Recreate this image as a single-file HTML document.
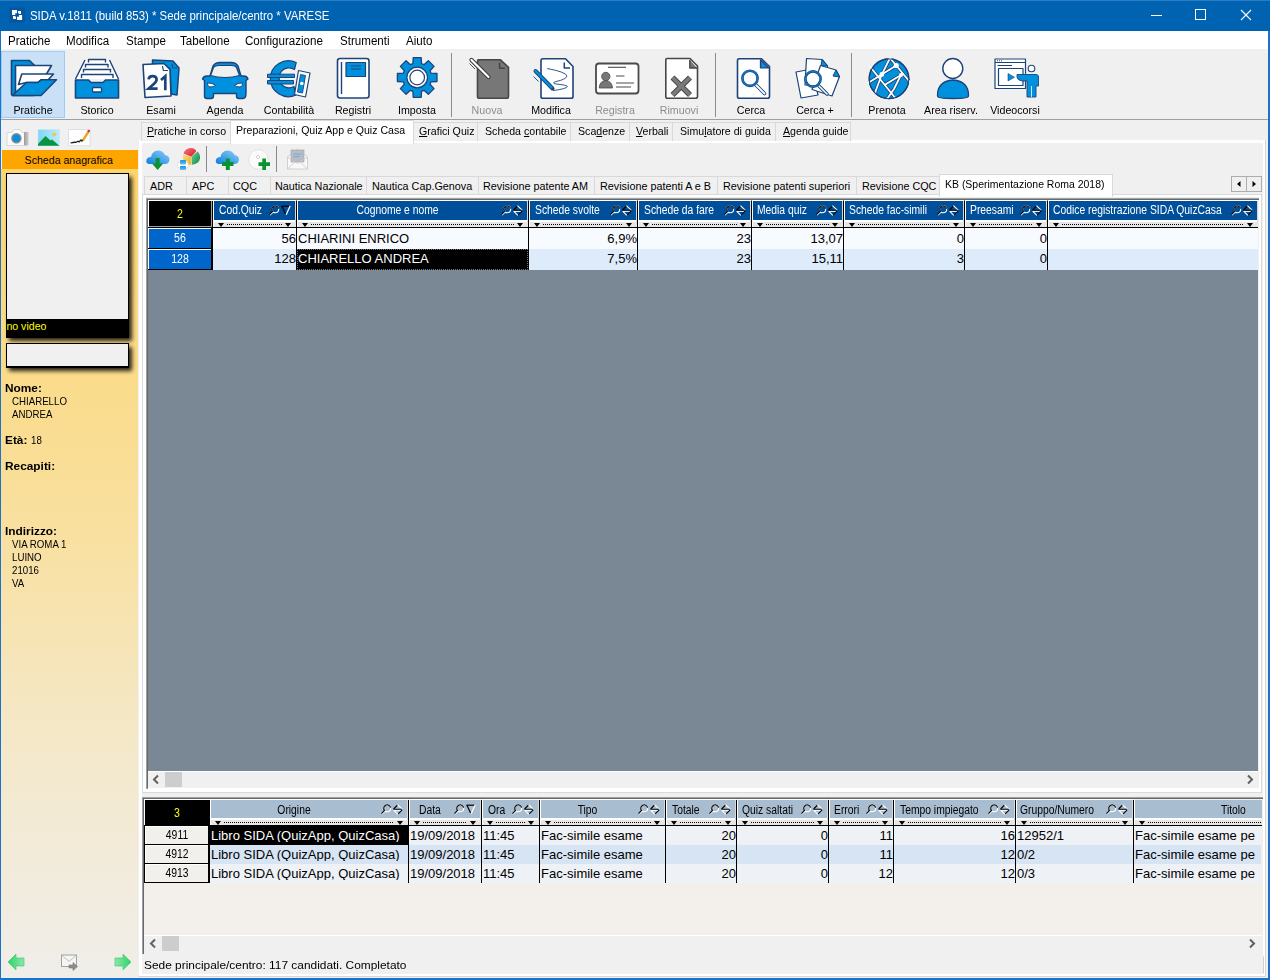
<!DOCTYPE html>
<html><head><meta charset="utf-8">
<style>
*{margin:0;padding:0;box-sizing:border-box}
html,body{width:1270px;height:980px;overflow:hidden;background:#f0f0f0;font-family:"Liberation Sans",sans-serif;}
.a{position:absolute}
.t{position:absolute;white-space:nowrap;line-height:1}
svg{position:absolute;overflow:visible}
.lbl{position:absolute;top:104px;width:64px;text-align:center;font-size:10.6px;color:#000;white-space:nowrap;line-height:1}
.mi{top:35px;font-size:12px;color:#000}
.tab{position:absolute;top:122px;height:19px;background:#f0f0f0;border:1px solid #d9d9d9;border-bottom:none}
.tabt{position:absolute;font-size:10.6px;white-space:nowrap;line-height:1;color:#000}
.stab{position:absolute;top:176px;height:19px;background:#f0f0f0;border:1px solid #d9d9d9;border-bottom:none}
.u{text-decoration:underline}
.ht{position:absolute;font-size:10.5px;white-space:nowrap;line-height:1}
.dt{position:absolute;font-size:13px;white-space:nowrap;line-height:1;color:#000}
.dots{position:absolute;height:1px;background-image:linear-gradient(90deg,#000 50%,transparent 50%);background-size:2px 1px}
</style></head><body>
<div class="a" style="left:0px;top:0px;width:1270px;height:980px;background:#1a73c8"></div>
<div class="a" style="left:1px;top:0px;width:1267px;height:978px;background:#f0f0f0"></div>
<div class="a" style="left:0px;top:0px;width:1270px;height:31px;background:#0063b1"></div>
<div class="a" style="left:0px;top:0px;width:1270px;height:1px;background:#2a7cc4"></div>
<svg style="left:0;top:0" width="40" height="31" viewBox="0 0 40 31">
<rect x="9.4" y="7.4" width="15.5" height="15.3" fill="#0656a2"/>
<path d="M12 10 H17 V13.3 H15.2 V15 H12 Z" fill="#fff"/>
<path d="M18 11 H21 V13.9 H19 L18 12.8 Z" fill="#fff"/>
<path d="M13 16 H15 L16 17 V18.9 H13 Z" fill="#fff"/>
<path d="M19 15 H22.1 V20.1 H17 V16.8 H19 Z" fill="#fff"/>
</svg>
<div class="t" style="top:10.04px;font-size:12px;color:#fff;left:30px;transform:scaleX(0.951);transform-origin:0 0;">SIDA v.1811 (build 853) * Sede principale/centro * VARESE</div>
<svg style="left:1130px;top:0" width="140" height="31" viewBox="1130 0 140 31">
<path d="M1151 15.5 h11" stroke="#fff" stroke-width="1"/>
<rect x="1195.5" y="9.5" width="10" height="10" fill="none" stroke="#fff" stroke-width="1"/>
<path d="M1241 10 l10 10 M1251 10 l-10 10" stroke="#fff" stroke-width="1.1"/>
</svg>
<div class="a" style="left:1px;top:31px;width:1267px;height:18px;background:#fff"></div>
<div class="t" style="top:34.52px;font-size:12.5px;color:#000;left:8px;transform:scaleX(0.927);transform-origin:0 0;">Pratiche</div>
<div class="t" style="top:34.52px;font-size:12.5px;color:#000;left:66px;transform:scaleX(0.927);transform-origin:0 0;">Modifica</div>
<div class="t" style="top:34.52px;font-size:12.5px;color:#000;left:126px;transform:scaleX(0.927);transform-origin:0 0;">Stampe</div>
<div class="t" style="top:34.52px;font-size:12.5px;color:#000;left:180px;transform:scaleX(0.927);transform-origin:0 0;">Tabellone</div>
<div class="t" style="top:34.52px;font-size:12.5px;color:#000;left:245px;transform:scaleX(0.927);transform-origin:0 0;">Configurazione</div>
<div class="t" style="top:34.52px;font-size:12.5px;color:#000;left:340px;transform:scaleX(0.927);transform-origin:0 0;">Strumenti</div>
<div class="t" style="top:34.52px;font-size:12.5px;color:#000;left:406px;transform:scaleX(0.927);transform-origin:0 0;">Aiuto</div>
<div class="a" style="left:1px;top:51px;width:64px;height:67px;background:#c9e0f7;border:1px solid #9ccdf5"></div>
<div class="a" style="left:1px;top:119px;width:1267px;height:1px;background:#a0a0a0"></div>
<div class="a" style="left:451px;top:53px;width:1px;height:64px;background:#8c8c8c"></div>
<div class="a" style="left:715px;top:53px;width:1px;height:64px;background:#8c8c8c"></div>
<div class="a" style="left:851px;top:53px;width:1px;height:64px;background:#8c8c8c"></div>
<div class="t" style="top:104.28px;font-size:11.6px;color:#000;left:-7.0px;width:80px;text-align:center;transform:scaleX(0.92);transform-origin:50% 0;">Pratiche</div>
<div class="t" style="top:104.28px;font-size:11.6px;color:#000;left:57.0px;width:80px;text-align:center;transform:scaleX(0.92);transform-origin:50% 0;">Storico</div>
<div class="t" style="top:104.28px;font-size:11.6px;color:#000;left:121.0px;width:80px;text-align:center;transform:scaleX(0.92);transform-origin:50% 0;">Esami</div>
<div class="t" style="top:104.28px;font-size:11.6px;color:#000;left:185.0px;width:80px;text-align:center;transform:scaleX(0.92);transform-origin:50% 0;">Agenda</div>
<div class="t" style="top:104.28px;font-size:11.6px;color:#000;left:249.0px;width:80px;text-align:center;transform:scaleX(0.92);transform-origin:50% 0;">Contabilità</div>
<div class="t" style="top:104.28px;font-size:11.6px;color:#000;left:313.0px;width:80px;text-align:center;transform:scaleX(0.92);transform-origin:50% 0;">Registri</div>
<div class="t" style="top:104.28px;font-size:11.6px;color:#000;left:377.0px;width:80px;text-align:center;transform:scaleX(0.92);transform-origin:50% 0;">Imposta</div>
<div class="t" style="top:104.28px;font-size:11.6px;color:#8d8d8d;left:447.0px;width:80px;text-align:center;transform:scaleX(0.92);transform-origin:50% 0;">Nuova</div>
<div class="t" style="top:104.28px;font-size:11.6px;color:#000;left:511.0px;width:80px;text-align:center;transform:scaleX(0.92);transform-origin:50% 0;">Modifica</div>
<div class="t" style="top:104.28px;font-size:11.6px;color:#8d8d8d;left:575.0px;width:80px;text-align:center;transform:scaleX(0.92);transform-origin:50% 0;">Registra</div>
<div class="t" style="top:104.28px;font-size:11.6px;color:#8d8d8d;left:639.0px;width:80px;text-align:center;transform:scaleX(0.92);transform-origin:50% 0;">Rimuovi</div>
<div class="t" style="top:104.28px;font-size:11.6px;color:#000;left:711.0px;width:80px;text-align:center;transform:scaleX(0.92);transform-origin:50% 0;">Cerca</div>
<div class="t" style="top:104.28px;font-size:11.6px;color:#000;left:775.0px;width:80px;text-align:center;transform:scaleX(0.92);transform-origin:50% 0;">Cerca +</div>
<div class="t" style="top:104.28px;font-size:11.6px;color:#000;left:847.0px;width:80px;text-align:center;transform:scaleX(0.92);transform-origin:50% 0;">Prenota</div>
<div class="t" style="top:104.28px;font-size:11.6px;color:#000;left:911.0px;width:80px;text-align:center;transform:scaleX(0.92);transform-origin:50% 0;">Area riserv.</div>
<div class="t" style="top:104.28px;font-size:11.6px;color:#000;left:975.0px;width:80px;text-align:center;transform:scaleX(0.92);transform-origin:50% 0;">Videocorsi</div>
<svg style="left:0;top:0" width="1270" height="120" viewBox="0 0 1270 120" stroke-linejoin="round">
<!-- Pratiche folder -->
<path d="M11.5 60.5 H29.5 L33.5 64.5 H34 V95.5 H12.5 L11.5 94.5 Z" fill="#0091de" stroke="#1c4479" stroke-width="1.6"/>
<path d="M15.5 65.5 H51.5 L46.5 74 L30 84 L15.5 92.5 Z" fill="#fff" stroke="#1c4479" stroke-width="1.6"/>
<path d="M18.5 84.5 L21.8 74 H53.5 L48 80 H41 L38 82.5 H26.5 Z" fill="#fff" stroke="#1c4479" stroke-width="1.6"/>
<path d="M15.5 92.5 L26.5 82.5 H38 L41 79.8 H56.5 L41 95.5 H12.5 Z" fill="#0091de" stroke="#1c4479" stroke-width="1.6"/>
<!-- Storico drawer -->
<path d="M85 60 L75.5 79 H118.5 L109.5 60 Z" fill="#fff"/>
<path d="M85 60 L75.5 79 M109.5 60 L118.5 79" stroke="#1c4479" stroke-width="1.4" fill="none"/>
<path d="M88.5 62.5 V59.5 H105.5 V62.5 M85.5 67.5 V64.5 H108 V67.5 M83.5 72.5 V69.5 H110.5 V72.5 M81.5 78 V74.5 H113 V78" fill="none" stroke="#1c4479" stroke-width="1.4"/>
<path d="M75.5 80 H88.5 L91 82.5 H103 L105.5 80 H118.5 V98 H75.5 Z" fill="#0091de" stroke="#1c4479" stroke-width="1.6"/>
<rect x="92.5" y="87.5" width="9" height="4.5" rx="1" fill="#fff" stroke="#1c4479" stroke-width="1.3"/>
<!-- Esami calendar -->
<path d="M152.5 60 L173 61 L179 68 L177 95 L171 94 L170 69 L164 64 L152.5 64 Z" fill="#0091de" stroke="#1c4479" stroke-width="1.5"/>
<path d="M143 64.5 L164 63.5 L170 69.5 L171 96 L145 97.5 Z" fill="#fff" stroke="#1c4479" stroke-width="1.6"/>
<path d="M162.5 66 L163.3 70.5 L168 70.5" fill="none" stroke="#1c4479" stroke-width="1.2"/>
<path d="M148.6 79.3 Q149 76.2 152.6 76.2 Q156.6 76.2 156.6 79.6 Q156.6 82 153.2 84.6 L148.6 88.6 H157.6" fill="none" stroke="#1c4479" stroke-width="2.7" stroke-linejoin="miter"/>
<path d="M161 80 L165.3 76.3 V90.3" fill="none" stroke="#1c4479" stroke-width="2.7" stroke-linejoin="miter"/>
<path d="M172 63.5 L172.5 67.8 L177 68.2" fill="none" stroke="#1c4479" stroke-width="1.1"/>
<!-- Agenda car -->
<path d="M210 76 L213 66 Q215 62.5 220 62.5 H231 Q236 62.5 238 66 L241 76 H243.5 Q247 76 248 79 L246 80.5 V93 Q246 98.5 243 98.5 H239 Q236.5 98.5 236.5 96 V93.5 H213.5 V96 Q213.5 98.5 211 98.5 H207 Q204.5 98.5 204.5 96 V80.5 L202.5 79 Q203.5 76 207 76 Z" fill="#0091de" stroke="#1c4479" stroke-width="1.4"/>
<path d="M210.5 75.5 L213.5 67.5 Q215 65.5 219 65.5 H231.5 Q235.5 65.5 236.5 67.5 L239.5 75.5 Q233 77.5 225 77.5 Q217 77.5 210.5 75.5 Z" fill="#f0f0f0" stroke="#1c4479" stroke-width="1.2"/>
<path d="M207.5 83 Q212 82.5 215.5 85.5 Q214 87 210 87 Q207 86.5 207.5 83 Z" fill="#fff" stroke="#1c4479" stroke-width="1"/>
<path d="M242.5 83 Q238 82.5 234.5 85.5 Q236 87 240 87 Q243 86.5 242.5 83 Z" fill="#fff" stroke="#1c4479" stroke-width="1"/>
<!-- Contabilita euro -->
<path d="M296.2 62.5 A18 18 0 1 0 296 95 L294 86.5 A10 10 0 1 1 294.5 69.5 Z" fill="#0091de" stroke="#1c4479" stroke-width="1.2"/>
<path d="M267.5 74.2 H294.5 V77.5 H267.5 Z M267.5 80.5 H293.5 V84 H267.5 Z" fill="#0091de" stroke="#1c4479" stroke-width="1"/>
<path d="M298.5 70.5 L310 73 L305.5 97 L294.5 94.5 Z" fill="#fff" stroke="#1c4479" stroke-width="1.2"/>
<path d="M300.5 74.5 L305.5 75.5 L302.5 93 L297.5 92 Z" fill="#0091de" stroke="#1c4479" stroke-width="0.9"/>
<circle cx="301.8" cy="83.5" r="1.8" fill="#fff"/>
<!-- Registri book -->
<rect x="337.5" y="58.5" width="31.5" height="39.5" rx="2.5" fill="#fff" stroke="#1c4479" stroke-width="1.6"/>
<path d="M341.5 62 V94" stroke="#1c4479" stroke-width="1.4"/>
<rect x="346" y="62.5" width="19.5" height="14" fill="#0091de" stroke="#1c4479" stroke-width="1.2"/>
<path d="M351 66 H361 M351 69 H361" stroke="#1c4479" stroke-width="1.2"/>
<!-- Imposta gear -->
<path d="M412.91 63.65 L413.19 57.70 L421.21 57.70 L421.49 63.65 L423.97 64.67 L428.36 60.66 L434.04 66.34 L430.03 70.73 L431.05 73.21 L437.00 73.49 L437.00 81.51 L431.05 81.79 L430.03 84.27 L434.04 88.66 L428.36 94.34 L423.97 90.33 L421.49 91.35 L421.21 97.30 L413.19 97.30 L412.91 91.35 L410.43 90.33 L406.04 94.34 L400.36 88.66 L404.37 84.27 L403.35 81.79 L397.40 81.51 L397.40 73.49 L403.35 73.21 L404.37 70.73 L400.36 66.34 L406.04 60.66 L410.43 64.67 Z" fill="#0091de" stroke="#1c4479" stroke-width="1.3"/><circle cx="417.2" cy="77.5" r="10.3" fill="#fff" stroke="#1c4479" stroke-width="1.2"/><circle cx="417.2" cy="77.5" r="7.3" fill="#fff" stroke="#1c4479" stroke-width="1.2"/>
<!-- Nuova -->
<path d="M478 59.8 H500.5 L508.5 67.3 V96.5 Q508.5 98.3 506.5 98.3 H479.5 Q477.5 98.3 477.5 96.5 V61.5 Q477.5 59.8 479.5 59.8 Z" fill="#777" stroke="#474747" stroke-width="1.6"/>
<path d="M499.6 62.5 V68.2 H505" fill="none" stroke="#474747" stroke-width="1.6"/>
<path d="M471.5 60 L488.5 77" stroke="#3a3a3a" stroke-width="4.2" stroke-linecap="round"/>
<path d="M471.5 60 L488.5 77" stroke="#fff" stroke-width="2.2" stroke-linecap="round"/>
<path d="M469.5 63.5 L475 69" stroke="#555" stroke-width="1"/>
<!-- Modifica -->
<path d="M543 58.8 H565.5 L573 66.5 V96.5 Q573 98.3 571 98.3 H543 Q541 98.3 541 96.5 V60.8 Q541 58.8 543 58.8 Z" fill="#fff" stroke="#1c4479" stroke-width="1.6"/>
<path d="M564.3 62.5 V68 H570" fill="none" stroke="#1c4479" stroke-width="1.5"/>
<path d="M547.2 68.5 Q566 72 567 76 Q566 79.5 556 81.5 Q551 83 556 84 Q567 85 567.5 86.5 Q566 89 553 90.5" fill="none" stroke="#1c4479" stroke-width="0.9"/>
<path d="M535.5 71 L552.5 88.5" stroke="#1c4479" stroke-width="4" stroke-linecap="round"/>
<path d="M535.5 71 L551.5 87.5" stroke="#0091de" stroke-width="2.2" stroke-linecap="round"/>
<path d="M533.5 76.5 L538.5 81.5" stroke="#1c4479" stroke-width="0.9"/>
<!-- Registra card -->
<rect x="596" y="63.5" width="42.5" height="30" rx="3" fill="#fff" stroke="#4a4a4a" stroke-width="1.8"/>
<path d="M608 67.3 H626" stroke="#4a4a4a" stroke-width="1.1"/>
<circle cx="605.8" cy="76.5" r="4.2" fill="#777" stroke="#4a4a4a" stroke-width="0.8"/>
<path d="M599.2 88 Q599.5 81 605.8 80.5 Q612 81 612.5 88 Z" fill="#777" stroke="#4a4a4a" stroke-width="0.8"/>
<path d="M616 76 H624.5 M616 83 H634 M616 87 H631" stroke="#888" stroke-width="1.5"/>
<!-- Rimuovi -->
<path d="M667 58.5 H690 L697.5 66 V96.5 Q697.5 98.3 695.5 98.3 H667.5 Q665.8 98.3 665.8 96.5 V60.5 Q665.8 58.5 667 58.5 Z" fill="#fff" stroke="#474747" stroke-width="1.6"/>
<path d="M689.8 60 V68 H697" fill="#777" stroke="#474747" stroke-width="1.4"/>
<path d="M672.5 77.5 L690 95 M690 77.5 L672.5 95" stroke="#474747" stroke-width="5.6"/>
<path d="M672.5 77.5 L690 95 M690 77.5 L672.5 95" stroke="#7a7a7a" stroke-width="3.8"/>
<!-- Cerca -->
<path d="M739 58.8 H761.5 L769.5 66.5 V96.5 Q769.5 98.3 767.5 98.3 H739.3 Q737.5 98.3 737.5 96.5 V60.8 Q737.5 58.8 739 58.8 Z" fill="#fff" stroke="#1c4479" stroke-width="1.6"/>
<path d="M760.5 60 V67.8 H768.5 Z" fill="#0091de" stroke="#1c4479" stroke-width="1.3"/>
<path d="M756 85 L764.5 93.5" stroke="#1c4479" stroke-width="3.6" stroke-linecap="round"/>
<path d="M756 85 L764.5 93.5" stroke="#fff" stroke-width="1.8" stroke-linecap="round"/>
<circle cx="750" cy="78.3" r="7.6" fill="#fff" stroke="#1c4479" stroke-width="2.6"/>
<circle cx="750" cy="78.3" r="7.6" fill="none" stroke="#0a78c8" stroke-width="1.4"/>
<!-- Cerca + -->
<path d="M796 72 L812 69 L818 95 L801 98 Z" fill="#fff" stroke="#1c4479" stroke-width="1.2"/>
<path d="M806.5 58.5 L822 59.5 L827.5 66 L826 86 L805 85 Z" fill="#fff" stroke="#1c4479" stroke-width="1.2"/>
<path d="M822 59.5 L821 66 L827.5 66 Z" fill="#0091de" stroke="#1c4479" stroke-width="1"/>
<path d="M820.5 65.5 L836 70 L839.5 76.5 L832 96 L812 89.5 Z" fill="#fff" stroke="#1c4479" stroke-width="1.2"/>
<path d="M836 70 L833 76 L839.5 77 Z" fill="#0091de" stroke="#1c4479" stroke-width="1"/>
<path d="M819 86 L827 94" stroke="#1c4479" stroke-width="3.4" stroke-linecap="round"/>
<path d="M819 86 L827 94" stroke="#fff" stroke-width="1.6" stroke-linecap="round"/>
<circle cx="813" cy="79" r="7.6" fill="#fff" stroke="#1c4479" stroke-width="2.6"/>
<circle cx="813" cy="79" r="7.6" fill="none" stroke="#0a78c8" stroke-width="1.4"/>
<!-- Prenota globe -->
<circle cx="889" cy="78.8" r="19.8" fill="#0091de" stroke="#1c4479" stroke-width="1.3"/>
<g fill="none" stroke-linecap="butt">
<g stroke="#1c4479" stroke-width="3.4">
<path d="M871.5 68.5 L894 96.5"/><path d="M889.5 59.5 L881.8 74.5 L875.5 91.5"/><path d="M891 59.5 L896.2 65.5 L909 81"/>
<path d="M869.5 82 L881.8 74.5 L896.2 65.5"/><path d="M884.5 85 L901 75"/><path d="M888 97.5 L894 89 L902 73"/>
</g>
<g stroke="#fff" stroke-width="1.7">
<path d="M870 66.6 L895.5 98.3"/><path d="M890 58 L881.8 74.5 L874.8 93.4"/><path d="M890 58 L896.2 65.5 L910.2 82.4"/>
<path d="M868 83 L881.8 74.5 L896.2 65.5"/><path d="M884.5 85 L901 75"/><path d="M887 99 L894 89 L902 73"/>
</g></g>
<circle cx="881.8" cy="74.5" r="2.4" fill="#fff"/>
<circle cx="896.2" cy="65.5" r="2.6" fill="#fff"/>
<circle cx="901" cy="75" r="2.1" fill="#fff"/>
<circle cx="889" cy="78.8" r="19.8" fill="none" stroke="#1c4479" stroke-width="1.1"/>
<!-- Area riserv person -->
<path d="M937.5 96 Q937 81.5 953 80 Q969 81.5 968.5 96 Q968.5 98.5 953 98.5 Q937.5 98.5 937.5 96 Z" fill="#0091de" stroke="#1c4479" stroke-width="1.3"/>
<circle cx="952.8" cy="68.5" r="10" fill="#fff" stroke="#1c4479" stroke-width="1.4"/>
<!-- Videocorsi -->
<rect x="995" y="59" width="30.5" height="29.5" fill="#fff" stroke="#1c4479" stroke-width="1.2"/>
<path d="M995 62.5 H1025.5" stroke="#1c4479" stroke-width="1"/>
<path d="M997 60.8 h1 M999 60.8 h1 M1001 60.8 h1" stroke="#1c4479" stroke-width="1"/>
<path d="M997.5 65.5 H1012" stroke="#1c4479" stroke-width="1"/>
<rect x="998.5" y="68.5" width="24.5" height="17" fill="#fff" stroke="#1c4479" stroke-width="1.2"/>
<path d="M1008 73.5 L1014.5 77.2 L1008 81 Z" fill="#0091de" stroke="#1c4479" stroke-width="0.6"/>
<circle cx="1031.5" cy="68.5" r="3.3" fill="#fff" stroke="#1c4479" stroke-width="1.1"/>
<path d="M1017 74.5 H1036 Q1038.5 74.5 1038.5 77 V86 H1036 V97 H1027 V81 H1022 Q1017 80 1017 77 Z" fill="#0091de" stroke="#1c4479" stroke-width="0.9"/>
<path d="M1031.5 86 V97" stroke="#fff" stroke-width="0.8"/>
</svg>
<div class="a" style="left:1px;top:120px;width:137px;height:30px;background:#f0f0f0"></div>
<svg style="left:0;top:120px" width="140" height="30" viewBox="0 120 140 30">
<defs><linearGradient id="sky" x1="0" y1="0" x2="1" y2="0"><stop offset="0" stop-color="#7fd6f5"/><stop offset="1" stop-color="#b8ecfb"/></linearGradient>
<linearGradient id="grip" x1="0" y1="0" x2="1" y2="0"><stop offset="0" stop-color="#9a9a9a"/><stop offset="1" stop-color="#d0d0d0"/></linearGradient></defs>
<path d="M7 132.5 H12 L14 129.5 H20 L22 132.5 H25 V145.5 H7 Z" fill="#fbfbfb" stroke="#d0d0d0" stroke-width="0.8"/>
<rect x="24" y="132" width="4.6" height="13.5" rx="1" fill="url(#grip)"/>
<circle cx="16.4" cy="138.3" r="5.2" fill="#8a8a8a"/>
<circle cx="16.4" cy="138.3" r="3.8" fill="#0a8fe0"/>
<rect x="38" y="129.5" width="21.4" height="16.3" fill="url(#sky)" stroke="#cfe3ee" stroke-width="0.6"/>
<path d="M38 144 L45.5 136 L50.5 140.5 L52 139.5 L59.4 145.8 H38 Z" fill="#0a9440"/>
<circle cx="54.2" cy="134.3" r="1.9" fill="#f0c84a"/>
<rect x="68.5" y="129.5" width="21.6" height="16.3" fill="#fff" stroke="#d3dbe6" stroke-width="0.8"/>
<path d="M70.5 143 Q74 142 76 142.3 L78 141.2 L79 142 L81 140 L82 141 L84 139" fill="none" stroke="#222" stroke-width="1.3"/>
<path d="M83.5 139.5 L88.5 131.5" stroke="#e8a530" stroke-width="2.4" stroke-linecap="round"/>
<circle cx="88.8" cy="131" r="1.2" fill="#e03030"/>
</svg>
<div class="a" style="left:2px;top:150px;width:136px;height:19px;background:#ffa500"></div>
<div class="t" style="top:154.83px;font-size:10.6px;color:#000;left:24.6px;">Scheda anagrafica</div>
<div class="a" style="left:1px;top:169px;width:137px;height:808px;background:linear-gradient(#fdd56c 0%,#fbd97f 15%,#f9e0a0 45%,#f4e8c8 70%,#f0eeea 100%)"></div>
<div class="a" style="left:9px;top:177px;width:123px;height:164px;background:#000;filter:blur(2px);opacity:.85"></div>
<div class="a" style="left:6px;top:173px;width:123px;height:165px;background:#000"></div>
<div class="a" style="left:7px;top:174px;width:121px;height:145px;background:#f0f0f0"></div>
<div class="t" style="top:321.03px;font-size:10.6px;color:#ffff00;left:6.4px;">no video</div>
<div class="a" style="left:9px;top:347px;width:123px;height:24px;background:#000;filter:blur(2px);opacity:.85"></div>
<div class="a" style="left:6px;top:343px;width:123px;height:25px;background:#000"></div>
<div class="a" style="left:7px;top:344px;width:121px;height:22px;background:#f0f0f0"></div>
<div class="t" style="top:382.83px;font-size:10.6px;color:#000;font-weight:bold;left:5.2px;transform:scaleX(1.12);transform-origin:0 0;">Nome:</div>
<div class="t" style="top:395.63px;font-size:10.6px;color:#000;left:12.2px;transform:scaleX(0.915);transform-origin:0 0;">CHIARELLO</div>
<div class="t" style="top:408.63px;font-size:10.6px;color:#000;left:12.2px;transform:scaleX(0.915);transform-origin:0 0;">ANDREA</div>
<div class="t" style="top:434.63px;font-size:10.6px;color:#000;font-weight:bold;left:5.2px;transform:scaleX(1.12);transform-origin:0 0;">Età:</div>
<div class="t" style="top:434.63px;font-size:10.6px;color:#000;left:30.5px;transform:scaleX(0.915);transform-origin:0 0;">18</div>
<div class="t" style="top:460.63px;font-size:10.6px;color:#000;font-weight:bold;left:5.2px;transform:scaleX(1.12);transform-origin:0 0;">Recapiti:</div>
<div class="t" style="top:525.63px;font-size:10.6px;color:#000;font-weight:bold;left:5.2px;transform:scaleX(1.12);transform-origin:0 0;">Indirizzo:</div>
<div class="t" style="top:538.63px;font-size:10.6px;color:#000;left:12.2px;transform:scaleX(0.915);transform-origin:0 0;">VIA ROMA 1</div>
<div class="t" style="top:551.63px;font-size:10.6px;color:#000;left:12.2px;transform:scaleX(0.915);transform-origin:0 0;">LUINO</div>
<div class="t" style="top:564.63px;font-size:10.6px;color:#000;left:12.2px;transform:scaleX(0.915);transform-origin:0 0;">21016</div>
<div class="t" style="top:577.63px;font-size:10.6px;color:#000;left:12.2px;transform:scaleX(0.915);transform-origin:0 0;">VA</div>
<svg style="left:0;top:950px" width="140" height="28" viewBox="0 950 140 28">
<defs><linearGradient id="ga" x1="0" y1="0" x2="1" y2="0"><stop offset="0" stop-color="#2fd36b"/><stop offset="1" stop-color="#8ae8a8"/></linearGradient>
<linearGradient id="gb" x1="1" y1="0" x2="0" y2="0"><stop offset="0" stop-color="#2fd36b"/><stop offset="1" stop-color="#8ae8a8"/></linearGradient></defs>
<path d="M8 962 L16 954 V958 H24 V966 H16 V970 Z" fill="url(#ga)" stroke="#3cc46a" stroke-width="0.6"/>
<path d="M131 962 L123 954 V958 H115 V966 H123 V970 Z" fill="url(#gb)" stroke="#3cc46a" stroke-width="0.6"/>
<rect x="61.5" y="955" width="15" height="11.5" fill="#f5f5f5" stroke="#9a9a9a" stroke-width="0.9"/>
<path d="M61.5 955 L69 961.5 L76.5 955" fill="none" stroke="#b0b0b0" stroke-width="0.8"/>
<path d="M69 965 H73 V962.5 L77.5 966.5 L73 970.5 V968 H69 Z" fill="#8e8e8e" stroke="#777" stroke-width="0.6"/>
</svg>
<div class="a" style="left:138px;top:120px;width:1130px;height:858px;background:#f0f0f0"></div>
<div class="a" style="left:139px;top:140px;width:1127px;height:837px;background:#d6d6d6"></div>
<div class="a" style="left:139px;top:140px;width:1126px;height:836px;background:#fff"></div>
<div class="a" style="left:142px;top:143px;width:1121px;height:831px;background:#f0f0f0"></div>
<div class="tab" style="left:141px;width:90px"></div>
<div class="t" style="top:126.39px;font-size:11px;color:#000;left:147px;transform:scaleX(0.965);transform-origin:0 0;"><span class="u">P</span>ratiche in corso</div>
<div class="tab" style="left:413px;width:65px"></div>
<div class="t" style="top:126.39px;font-size:11px;color:#000;left:419px;transform:scaleX(0.965);transform-origin:0 0;"><span class="u">G</span>rafici Quiz</div>
<div class="tab" style="left:477px;width:94px"></div>
<div class="t" style="top:126.39px;font-size:11px;color:#000;left:485px;transform:scaleX(0.965);transform-origin:0 0;">Scheda <span class="u">c</span>ontabile</div>
<div class="tab" style="left:570px;width:60px"></div>
<div class="t" style="top:126.39px;font-size:11px;color:#000;left:578px;transform:scaleX(0.965);transform-origin:0 0;">Sca<span class="u">d</span>enze</div>
<div class="tab" style="left:629px;width:44px"></div>
<div class="t" style="top:126.39px;font-size:11px;color:#000;left:636px;transform:scaleX(0.965);transform-origin:0 0;"><span class="u">V</span>erbali</div>
<div class="tab" style="left:672px;width:104px"></div>
<div class="t" style="top:126.39px;font-size:11px;color:#000;left:680px;transform:scaleX(0.965);transform-origin:0 0;">Simu<span class="u">l</span>atore di guida</div>
<div class="tab" style="left:775px;width:76px"></div>
<div class="t" style="top:126.39px;font-size:11px;color:#000;left:783px;transform:scaleX(0.965);transform-origin:0 0;"><span class="u">A</span>genda guide</div>
<div class="a" style="left:230px;top:120px;width:184px;height:24px;background:#fff;border:1px solid #d9d9d9;border-bottom:none"></div>
<div class="t" style="top:125.29px;font-size:11px;color:#000;left:236.4px;transform:scaleX(0.96);transform-origin:0 0;">Preparazioni, Quiz App e Quiz Casa</div>
<svg style="left:140px;top:144px" width="180" height="32" viewBox="140 144 180 32">
<defs><linearGradient id="cl" x1="0" y1="1" x2="1" y2="0"><stop offset="0" stop-color="#0a7fe0"/><stop offset="1" stop-color="#8fd0f5"/></linearGradient></defs>
<path d="M149 164 Q145.5 163.5 146.5 159.5 Q147.5 156.5 151 157 Q152 151 158 150.5 Q163 150.5 165 155 Q169.5 155.5 169.5 159.5 Q169 164 165 164 Z" fill="url(#cl)"/>
<path d="M155.6 158 H159.6 V163.5 H163.2 L157.6 170 L152 163.5 H155.6 Z" fill="#0a9430"/>
<defs><linearGradient id="rd" x1="0" y1="0" x2="1" y2="1"><stop offset="0" stop-color="#f27a85"/><stop offset="1" stop-color="#e0141e"/></linearGradient>
<linearGradient id="gr" x1="0" y1="0" x2="1" y2="1"><stop offset="0" stop-color="#6fcfa0"/><stop offset="1" stop-color="#0b8a3a"/></linearGradient>
<linearGradient id="yl" x1="0" y1="0" x2="1" y2="1"><stop offset="0" stop-color="#f8dc78"/><stop offset="1" stop-color="#f0b020"/></linearGradient>
<linearGradient id="bl" x1="0" y1="0" x2="0" y2="1"><stop offset="0" stop-color="#1a8fe0"/><stop offset="1" stop-color="#6cc0f0"/></linearGradient></defs>
<path d="M183.5 153.6 Q185 148.5 190.5 148 Q195 148 196.3 151.3 L191.4 156.8 Z" fill="url(#rd)"/>
<path d="M183 154.3 L191.3 157 V164.8 H188 V162 L183 159.5 Z" fill="url(#yl)"/>
<path d="M191.6 156.8 L197.6 151.6 Q200.5 154.5 200 158.5 Q199 164 192 164.8 Z" fill="url(#gr)"/>
<rect x="177.6" y="162" width="11" height="6" rx="2.5" fill="#fff" stroke="#cfcfcf" stroke-width="0.6"/>
<rect x="180" y="160" width="6" height="4.6" rx="1" fill="url(#bl)"/>
<rect x="180" y="166" width="6" height="4" rx="0.8" fill="url(#bl)"/>
<path d="M206.5 146 V172" stroke="#8a8a8a" stroke-width="1"/>
<path d="M218.5 164 Q215 163.5 216 159.5 Q217 156.5 220.5 157 Q221.5 151 227.5 150.5 Q232.5 150.5 234.5 155 Q239 155.5 239 159.5 Q238.5 164 234.5 164 Z" fill="url(#cl)"/>
<path d="M225.8 158.5 H229.8 V162 H233.5 V166 H229.8 V170 H225.8 V166 H222 V162 H225.8 Z" fill="#0a9430"/>
<circle cx="258.5" cy="159.5" r="9.8" fill="#fbfbfb" stroke="#dcdcdc" stroke-width="0.8"/>
<path d="M256 157 L258 155 L260 157 L258 159 Z" fill="none" stroke="#bbb" stroke-width="0.7"/>
<path d="M262.3 158.5 H266 V162.3 H270 V166 H266 V170 H262.3 V166 H258.5 V162.3 H262.3 Z" fill="#0a9430"/>
<path d="M276.5 146 V172" stroke="#8a8a8a" stroke-width="1"/>
<path d="M287.5 157 L297.5 149 L307.5 157 V169 H287.5 Z" fill="#f8f8f8" stroke="#c8c8c8" stroke-width="0.8"/>
<rect x="291" y="150" width="13" height="12" fill="#b8bcc4" stroke="#a0a4ac" stroke-width="0.6"/>
<path d="M293.5 154 H301.5 M293.5 156.5 H299.5" stroke="#6aaee0" stroke-width="1.2"/>
<path d="M287.5 157 L297.5 163.5 L307.5 157 M287.5 169 L295 162 M307.5 169 L300 162" fill="none" stroke="#c8c8c8" stroke-width="0.8"/>
</svg>
<div class="stab" style="left:144px;width:43px"></div>
<div class="t" style="top:180.86px;font-size:10.8px;color:#000;left:150px;">ADR</div>
<div class="stab" style="left:186px;width:43px"></div>
<div class="t" style="top:180.86px;font-size:10.8px;color:#000;left:192px;">APC</div>
<div class="stab" style="left:228px;width:43px"></div>
<div class="t" style="top:180.86px;font-size:10.8px;color:#000;left:233px;">CQC</div>
<div class="stab" style="left:270px;width:97px"></div>
<div class="t" style="top:180.86px;font-size:10.8px;color:#000;left:275px;">Nautica Nazionale</div>
<div class="stab" style="left:366px;width:113px"></div>
<div class="t" style="top:180.86px;font-size:10.8px;color:#000;left:372px;">Nautica Cap.Genova</div>
<div class="stab" style="left:478px;width:117px"></div>
<div class="t" style="top:180.86px;font-size:10.8px;color:#000;left:483px;">Revisione patente AM</div>
<div class="stab" style="left:594px;width:124px"></div>
<div class="t" style="top:180.86px;font-size:10.8px;color:#000;left:600px;">Revisione patenti A e B</div>
<div class="stab" style="left:717px;width:140px"></div>
<div class="t" style="top:180.86px;font-size:10.8px;color:#000;left:723px;">Revisione patenti superiori</div>
<div class="stab" style="left:856px;width:84px"></div>
<div class="t" style="top:180.86px;font-size:10.8px;color:#000;left:862px;">Revisione CQC</div>
<div class="a" style="left:142px;top:194px;width:1120px;height:599px;background:#dadada"></div>
<div class="a" style="left:143px;top:195px;width:1118px;height:597px;background:#fff"></div>
<div class="a" style="left:146px;top:197px;width:1113px;height:591px;background:#f0f0f0"></div>
<div class="a" style="left:939px;top:174px;width:174px;height:23px;background:#fff;border:1px solid #d9d9d9;border-bottom:none"></div>
<div class="t" style="top:179.36px;font-size:10.8px;color:#000;left:945px;transform:scaleX(0.97);transform-origin:0 0;">KB (Sperimentazione Roma 2018)</div>
<div class="a" style="left:1231px;top:176px;width:16px;height:16px;background:#f0f0f0;border:1px solid #adadad"></div>
<div class="a" style="left:1246px;top:176px;width:16px;height:16px;background:#f0f0f0;border:1px solid #adadad"></div>
<svg style="left:1231px;top:176px" width="32" height="16" viewBox="0 0 32 16"><path d="M9.5 5 L6 8 L9.5 11 Z M21.5 5 L25 8 L21.5 11 Z" fill="#000"/></svg>
<div class="a" style="left:146px;top:198px;width:1113px;height:2px;background:#a0a0a0"></div>
<div class="a" style="left:146px;top:198px;width:2px;height:591px;background:#a0a0a0"></div>
<div class="a" style="left:147px;top:199px;width:1112px;height:1px;background:#696969"></div>
<div class="a" style="left:147px;top:199px;width:1px;height:589px;background:#696969"></div>
<div class="a" style="left:148px;top:200px;width:1110px;height:571px;background:#7a8896"></div>
<div class="a" style="left:148px;top:200px;width:65px;height:28px;background:#fff"></div>
<div class="a" style="left:211px;top:201px;width:1px;height:26px;background:#a0a0a0"></div>
<div class="a" style="left:149px;top:226px;width:63px;height:1px;background:#a0a0a0"></div>
<div class="a" style="left:149px;top:201px;width:62px;height:25px;background:#000"></div>
<div class="t" style="top:208.14px;font-size:12px;color:#ffff00;left:160.0px;width:40px;text-align:center;transform:scaleX(0.88);transform-origin:50% 0;">2</div>
<div class="a" style="left:148px;top:227px;width:1110px;height:1px;background:#000"></div>
<div class="a" style="left:213px;top:228px;width:1045px;height:21px;background:#f7faff"></div>
<div class="a" style="left:213px;top:249px;width:1045px;height:21px;background:#ddebfa"></div>
<div class="a" style="left:213px;top:200px;width:83px;height:27px;background:#fff"></div>
<div class="a" style="left:295px;top:201px;width:1px;height:26px;background:#d8d8d8"></div>
<div class="a" style="left:214px;top:201px;width:81px;height:19px;background:#004f9a"></div>
<div class="a" style="left:214px;top:222px;width:82px;height:5px;background:#e6e6e6"></div>
<div class="t" style="top:203.84px;font-size:12px;color:#fff;left:218.7px;transform:scaleX(0.86);transform-origin:0 0;">Cod.Quiz</div>
<svg style="left:269px;top:205px" width="11" height="11" viewBox="0 0 11 11"><circle cx="6.2" cy="4.3" r="3.5" fill="none" stroke="#fff" stroke-width="1.1"/><path d="M3.73 6.77 A3.5 3.5 0 1 1 9.65 3.7" fill="none" stroke="#000" stroke-width="1.1"/><path d="M3.9 7.3 L1 10.2" stroke="#fff" stroke-width="1.1"/><path d="M3.3 6.6 L0.5 9.6" stroke="#000" stroke-width="1.1"/></svg>
<svg style="left:281px;top:205px" width="10" height="11" viewBox="0 0 10 11"><path d="M0.5 1.2 H8.8" stroke="#000" stroke-width="1.2"/><path d="M0.8 1 L4.6 9" stroke="#000" stroke-width="1.2"/><path d="M9.2 0.8 L5.2 9.8" stroke="#fff" stroke-width="1.2"/></svg>
<svg style="left:218px;top:223px" width="6" height="4" viewBox="0 0 6 4"><path d="M0 0 L6 0 L3 4 Z" fill="#000"/></svg>
<svg style="left:285px;top:223px" width="6" height="4" viewBox="0 0 6 4"><path d="M0 0 L6 0 L3 4 Z" fill="#000"/></svg>
<div class="dots" style="left:227px;top:224px;width:55px"></div>
<div class="a" style="left:297px;top:200px;width:231px;height:27px;background:#fff"></div>
<div class="a" style="left:527px;top:201px;width:1px;height:26px;background:#d8d8d8"></div>
<div class="a" style="left:298px;top:201px;width:229px;height:19px;background:#004f9a"></div>
<div class="a" style="left:298px;top:222px;width:230px;height:5px;background:#e6e6e6"></div>
<div class="t" style="top:203.84px;font-size:12px;color:#fff;left:282.0px;width:231px;text-align:center;transform:scaleX(0.86);transform-origin:50% 0;">Cognome e nome</div>
<svg style="left:501px;top:205px" width="11" height="11" viewBox="0 0 11 11"><circle cx="6.2" cy="4.3" r="3.5" fill="none" stroke="#fff" stroke-width="1.1"/><path d="M3.73 6.77 A3.5 3.5 0 1 1 9.65 3.7" fill="none" stroke="#000" stroke-width="1.1"/><path d="M3.9 7.3 L1 10.2" stroke="#fff" stroke-width="1.1"/><path d="M3.3 6.6 L0.5 9.6" stroke="#000" stroke-width="1.1"/></svg>
<svg style="left:513px;top:205px" width="10" height="11" viewBox="0 0 10 11"><path d="M0.6 5 L4.6 1" stroke="#000" stroke-width="1.1"/><path d="M4.4 0.6 L9.2 5.2" stroke="#fff" stroke-width="1.1"/><path d="M0.5 5.3 H8.8" stroke="#000" stroke-width="1.1"/><path d="M1 6.4 H9" stroke="#fff" stroke-width="1"/><path d="M0.6 6.2 L4.8 10.4" stroke="#fff" stroke-width="1.1"/><path d="M9.2 5.9 L5.2 9.9" stroke="#000" stroke-width="1.1"/></svg>
<svg style="left:302px;top:223px" width="6" height="4" viewBox="0 0 6 4"><path d="M0 0 L6 0 L3 4 Z" fill="#000"/></svg>
<svg style="left:517px;top:223px" width="6" height="4" viewBox="0 0 6 4"><path d="M0 0 L6 0 L3 4 Z" fill="#000"/></svg>
<div class="dots" style="left:311px;top:224px;width:203px"></div>
<div class="a" style="left:529px;top:200px;width:108px;height:27px;background:#fff"></div>
<div class="a" style="left:636px;top:201px;width:1px;height:26px;background:#d8d8d8"></div>
<div class="a" style="left:530px;top:201px;width:106px;height:19px;background:#004f9a"></div>
<div class="a" style="left:530px;top:222px;width:107px;height:5px;background:#e6e6e6"></div>
<div class="t" style="top:203.84px;font-size:12px;color:#fff;left:534.5px;transform:scaleX(0.86);transform-origin:0 0;">Schede svolte</div>
<svg style="left:610px;top:205px" width="11" height="11" viewBox="0 0 11 11"><circle cx="6.2" cy="4.3" r="3.5" fill="none" stroke="#fff" stroke-width="1.1"/><path d="M3.73 6.77 A3.5 3.5 0 1 1 9.65 3.7" fill="none" stroke="#000" stroke-width="1.1"/><path d="M3.9 7.3 L1 10.2" stroke="#fff" stroke-width="1.1"/><path d="M3.3 6.6 L0.5 9.6" stroke="#000" stroke-width="1.1"/></svg>
<svg style="left:622px;top:205px" width="10" height="11" viewBox="0 0 10 11"><path d="M0.6 5 L4.6 1" stroke="#000" stroke-width="1.1"/><path d="M4.4 0.6 L9.2 5.2" stroke="#fff" stroke-width="1.1"/><path d="M0.5 5.3 H8.8" stroke="#000" stroke-width="1.1"/><path d="M1 6.4 H9" stroke="#fff" stroke-width="1"/><path d="M0.6 6.2 L4.8 10.4" stroke="#fff" stroke-width="1.1"/><path d="M9.2 5.9 L5.2 9.9" stroke="#000" stroke-width="1.1"/></svg>
<svg style="left:534px;top:223px" width="6" height="4" viewBox="0 0 6 4"><path d="M0 0 L6 0 L3 4 Z" fill="#000"/></svg>
<svg style="left:626px;top:223px" width="6" height="4" viewBox="0 0 6 4"><path d="M0 0 L6 0 L3 4 Z" fill="#000"/></svg>
<div class="dots" style="left:543px;top:224px;width:80px"></div>
<div class="a" style="left:638px;top:200px;width:113px;height:27px;background:#fff"></div>
<div class="a" style="left:750px;top:201px;width:1px;height:26px;background:#d8d8d8"></div>
<div class="a" style="left:639px;top:201px;width:111px;height:19px;background:#004f9a"></div>
<div class="a" style="left:639px;top:222px;width:112px;height:5px;background:#e6e6e6"></div>
<div class="t" style="top:203.84px;font-size:12px;color:#fff;left:643.5px;transform:scaleX(0.86);transform-origin:0 0;">Schede da fare</div>
<svg style="left:724px;top:205px" width="11" height="11" viewBox="0 0 11 11"><circle cx="6.2" cy="4.3" r="3.5" fill="none" stroke="#fff" stroke-width="1.1"/><path d="M3.73 6.77 A3.5 3.5 0 1 1 9.65 3.7" fill="none" stroke="#000" stroke-width="1.1"/><path d="M3.9 7.3 L1 10.2" stroke="#fff" stroke-width="1.1"/><path d="M3.3 6.6 L0.5 9.6" stroke="#000" stroke-width="1.1"/></svg>
<svg style="left:736px;top:205px" width="10" height="11" viewBox="0 0 10 11"><path d="M0.6 5 L4.6 1" stroke="#000" stroke-width="1.1"/><path d="M4.4 0.6 L9.2 5.2" stroke="#fff" stroke-width="1.1"/><path d="M0.5 5.3 H8.8" stroke="#000" stroke-width="1.1"/><path d="M1 6.4 H9" stroke="#fff" stroke-width="1"/><path d="M0.6 6.2 L4.8 10.4" stroke="#fff" stroke-width="1.1"/><path d="M9.2 5.9 L5.2 9.9" stroke="#000" stroke-width="1.1"/></svg>
<svg style="left:643px;top:223px" width="6" height="4" viewBox="0 0 6 4"><path d="M0 0 L6 0 L3 4 Z" fill="#000"/></svg>
<svg style="left:740px;top:223px" width="6" height="4" viewBox="0 0 6 4"><path d="M0 0 L6 0 L3 4 Z" fill="#000"/></svg>
<div class="dots" style="left:652px;top:224px;width:85px"></div>
<div class="a" style="left:752px;top:200px;width:91px;height:27px;background:#fff"></div>
<div class="a" style="left:842px;top:201px;width:1px;height:26px;background:#d8d8d8"></div>
<div class="a" style="left:753px;top:201px;width:89px;height:19px;background:#004f9a"></div>
<div class="a" style="left:753px;top:222px;width:90px;height:5px;background:#e6e6e6"></div>
<div class="t" style="top:203.84px;font-size:12px;color:#fff;left:757px;transform:scaleX(0.86);transform-origin:0 0;">Media quiz</div>
<svg style="left:816px;top:205px" width="11" height="11" viewBox="0 0 11 11"><circle cx="6.2" cy="4.3" r="3.5" fill="none" stroke="#fff" stroke-width="1.1"/><path d="M3.73 6.77 A3.5 3.5 0 1 1 9.65 3.7" fill="none" stroke="#000" stroke-width="1.1"/><path d="M3.9 7.3 L1 10.2" stroke="#fff" stroke-width="1.1"/><path d="M3.3 6.6 L0.5 9.6" stroke="#000" stroke-width="1.1"/></svg>
<svg style="left:828px;top:205px" width="10" height="11" viewBox="0 0 10 11"><path d="M0.6 5 L4.6 1" stroke="#000" stroke-width="1.1"/><path d="M4.4 0.6 L9.2 5.2" stroke="#fff" stroke-width="1.1"/><path d="M0.5 5.3 H8.8" stroke="#000" stroke-width="1.1"/><path d="M1 6.4 H9" stroke="#fff" stroke-width="1"/><path d="M0.6 6.2 L4.8 10.4" stroke="#fff" stroke-width="1.1"/><path d="M9.2 5.9 L5.2 9.9" stroke="#000" stroke-width="1.1"/></svg>
<svg style="left:757px;top:223px" width="6" height="4" viewBox="0 0 6 4"><path d="M0 0 L6 0 L3 4 Z" fill="#000"/></svg>
<svg style="left:832px;top:223px" width="6" height="4" viewBox="0 0 6 4"><path d="M0 0 L6 0 L3 4 Z" fill="#000"/></svg>
<div class="dots" style="left:766px;top:224px;width:63px"></div>
<div class="a" style="left:844px;top:200px;width:120px;height:27px;background:#fff"></div>
<div class="a" style="left:963px;top:201px;width:1px;height:26px;background:#d8d8d8"></div>
<div class="a" style="left:845px;top:201px;width:118px;height:19px;background:#004f9a"></div>
<div class="a" style="left:845px;top:222px;width:119px;height:5px;background:#e6e6e6"></div>
<div class="t" style="top:203.84px;font-size:12px;color:#fff;left:849.3px;transform:scaleX(0.86);transform-origin:0 0;">Schede fac-simili</div>
<svg style="left:937px;top:205px" width="11" height="11" viewBox="0 0 11 11"><circle cx="6.2" cy="4.3" r="3.5" fill="none" stroke="#fff" stroke-width="1.1"/><path d="M3.73 6.77 A3.5 3.5 0 1 1 9.65 3.7" fill="none" stroke="#000" stroke-width="1.1"/><path d="M3.9 7.3 L1 10.2" stroke="#fff" stroke-width="1.1"/><path d="M3.3 6.6 L0.5 9.6" stroke="#000" stroke-width="1.1"/></svg>
<svg style="left:949px;top:205px" width="10" height="11" viewBox="0 0 10 11"><path d="M0.6 5 L4.6 1" stroke="#000" stroke-width="1.1"/><path d="M4.4 0.6 L9.2 5.2" stroke="#fff" stroke-width="1.1"/><path d="M0.5 5.3 H8.8" stroke="#000" stroke-width="1.1"/><path d="M1 6.4 H9" stroke="#fff" stroke-width="1"/><path d="M0.6 6.2 L4.8 10.4" stroke="#fff" stroke-width="1.1"/><path d="M9.2 5.9 L5.2 9.9" stroke="#000" stroke-width="1.1"/></svg>
<svg style="left:849px;top:223px" width="6" height="4" viewBox="0 0 6 4"><path d="M0 0 L6 0 L3 4 Z" fill="#000"/></svg>
<svg style="left:953px;top:223px" width="6" height="4" viewBox="0 0 6 4"><path d="M0 0 L6 0 L3 4 Z" fill="#000"/></svg>
<div class="dots" style="left:858px;top:224px;width:92px"></div>
<div class="a" style="left:965px;top:200px;width:82px;height:27px;background:#fff"></div>
<div class="a" style="left:1046px;top:201px;width:1px;height:26px;background:#d8d8d8"></div>
<div class="a" style="left:966px;top:201px;width:80px;height:19px;background:#004f9a"></div>
<div class="a" style="left:966px;top:222px;width:81px;height:5px;background:#e6e6e6"></div>
<div class="t" style="top:203.84px;font-size:12px;color:#fff;left:969.5px;transform:scaleX(0.86);transform-origin:0 0;">Preesami</div>
<svg style="left:1020px;top:205px" width="11" height="11" viewBox="0 0 11 11"><circle cx="6.2" cy="4.3" r="3.5" fill="none" stroke="#fff" stroke-width="1.1"/><path d="M3.73 6.77 A3.5 3.5 0 1 1 9.65 3.7" fill="none" stroke="#000" stroke-width="1.1"/><path d="M3.9 7.3 L1 10.2" stroke="#fff" stroke-width="1.1"/><path d="M3.3 6.6 L0.5 9.6" stroke="#000" stroke-width="1.1"/></svg>
<svg style="left:1032px;top:205px" width="10" height="11" viewBox="0 0 10 11"><path d="M0.6 5 L4.6 1" stroke="#000" stroke-width="1.1"/><path d="M4.4 0.6 L9.2 5.2" stroke="#fff" stroke-width="1.1"/><path d="M0.5 5.3 H8.8" stroke="#000" stroke-width="1.1"/><path d="M1 6.4 H9" stroke="#fff" stroke-width="1"/><path d="M0.6 6.2 L4.8 10.4" stroke="#fff" stroke-width="1.1"/><path d="M9.2 5.9 L5.2 9.9" stroke="#000" stroke-width="1.1"/></svg>
<svg style="left:970px;top:223px" width="6" height="4" viewBox="0 0 6 4"><path d="M0 0 L6 0 L3 4 Z" fill="#000"/></svg>
<svg style="left:1036px;top:223px" width="6" height="4" viewBox="0 0 6 4"><path d="M0 0 L6 0 L3 4 Z" fill="#000"/></svg>
<div class="dots" style="left:979px;top:224px;width:54px"></div>
<div class="a" style="left:1048px;top:200px;width:210px;height:27px;background:#fff"></div>
<div class="a" style="left:1257px;top:201px;width:1px;height:26px;background:#d8d8d8"></div>
<div class="a" style="left:1049px;top:201px;width:208px;height:19px;background:#004f9a"></div>
<div class="a" style="left:1049px;top:222px;width:209px;height:5px;background:#e6e6e6"></div>
<div class="t" style="top:203.84px;font-size:12px;color:#fff;left:1053px;transform:scaleX(0.86);transform-origin:0 0;">Codice registrazione SIDA QuizCasa</div>
<svg style="left:1231px;top:205px" width="11" height="11" viewBox="0 0 11 11"><circle cx="6.2" cy="4.3" r="3.5" fill="none" stroke="#fff" stroke-width="1.1"/><path d="M3.73 6.77 A3.5 3.5 0 1 1 9.65 3.7" fill="none" stroke="#000" stroke-width="1.1"/><path d="M3.9 7.3 L1 10.2" stroke="#fff" stroke-width="1.1"/><path d="M3.3 6.6 L0.5 9.6" stroke="#000" stroke-width="1.1"/></svg>
<svg style="left:1243px;top:205px" width="10" height="11" viewBox="0 0 10 11"><path d="M0.6 5 L4.6 1" stroke="#000" stroke-width="1.1"/><path d="M4.4 0.6 L9.2 5.2" stroke="#fff" stroke-width="1.1"/><path d="M0.5 5.3 H8.8" stroke="#000" stroke-width="1.1"/><path d="M1 6.4 H9" stroke="#fff" stroke-width="1"/><path d="M0.6 6.2 L4.8 10.4" stroke="#fff" stroke-width="1.1"/><path d="M9.2 5.9 L5.2 9.9" stroke="#000" stroke-width="1.1"/></svg>
<svg style="left:1053px;top:223px" width="6" height="4" viewBox="0 0 6 4"><path d="M0 0 L6 0 L3 4 Z" fill="#000"/></svg>
<svg style="left:1247px;top:223px" width="6" height="4" viewBox="0 0 6 4"><path d="M0 0 L6 0 L3 4 Z" fill="#000"/></svg>
<div class="dots" style="left:1062px;top:224px;width:182px"></div>
<div class="a" style="left:212px;top:201px;width:1px;height:69px;background:#000"></div>
<div class="a" style="left:296px;top:201px;width:1px;height:69px;background:#000"></div>
<div class="a" style="left:528px;top:201px;width:1px;height:69px;background:#000"></div>
<div class="a" style="left:637px;top:201px;width:1px;height:69px;background:#000"></div>
<div class="a" style="left:751px;top:201px;width:1px;height:69px;background:#000"></div>
<div class="a" style="left:843px;top:201px;width:1px;height:69px;background:#000"></div>
<div class="a" style="left:964px;top:201px;width:1px;height:69px;background:#000"></div>
<div class="a" style="left:1047px;top:201px;width:1px;height:69px;background:#000"></div>
<div class="a" style="left:297px;top:249px;width:231px;height:21px;background:#000"></div>
<div class="a" style="left:297px;top:249px;width:231px;height:21px;border:1px dotted #777"></div>
<div class="a" style="left:148px;top:228px;width:64px;height:21px;background:#000"></div>
<div class="a" style="left:148px;top:228px;width:63px;height:20px;background:#fff"></div>
<div class="a" style="left:149px;top:229px;width:62px;height:19px;background:#0066cc"></div>
<div class="t" style="top:231.84px;font-size:12px;color:#fff;left:155.0px;width:50px;text-align:center;transform:scaleX(0.88);transform-origin:50% 0;">56</div>
<div class="a" style="left:148px;top:249px;width:64px;height:21px;background:#000"></div>
<div class="a" style="left:148px;top:249px;width:63px;height:20px;background:#fff"></div>
<div class="a" style="left:149px;top:250px;width:62px;height:19px;background:#0066cc"></div>
<div class="t" style="top:252.84px;font-size:12px;color:#fff;left:155.0px;width:50px;text-align:center;transform:scaleX(0.88);transform-origin:50% 0;">128</div>
<div class="t" style="top:231.80px;font-size:13px;color:#000;left:213px;width:83px;text-align:right;">56</div>
<div class="t" style="top:231.80px;font-size:13px;color:#000;left:298px;">CHIARINI ENRICO</div>
<div class="t" style="top:231.80px;font-size:13px;color:#000;left:529px;width:108px;text-align:right;">6,9%</div>
<div class="t" style="top:231.80px;font-size:13px;color:#000;left:638px;width:113px;text-align:right;">23</div>
<div class="t" style="top:231.80px;font-size:13px;color:#000;left:752px;width:91px;text-align:right;">13,07</div>
<div class="t" style="top:231.80px;font-size:13px;color:#000;left:844px;width:120px;text-align:right;">0</div>
<div class="t" style="top:231.80px;font-size:13px;color:#000;left:965px;width:82px;text-align:right;">0</div>
<div class="t" style="top:252.20px;font-size:13px;color:#000;left:213px;width:83px;text-align:right;">128</div>
<div class="t" style="top:252.20px;font-size:13px;color:#fff;left:298px;">CHIARELLO ANDREA</div>
<div class="t" style="top:252.20px;font-size:13px;color:#000;left:529px;width:108px;text-align:right;">7,5%</div>
<div class="t" style="top:252.20px;font-size:13px;color:#000;left:638px;width:113px;text-align:right;">23</div>
<div class="t" style="top:252.20px;font-size:13px;color:#000;left:752px;width:91px;text-align:right;">15,11</div>
<div class="t" style="top:252.20px;font-size:13px;color:#000;left:844px;width:120px;text-align:right;">3</div>
<div class="t" style="top:252.20px;font-size:13px;color:#000;left:965px;width:82px;text-align:right;">0</div>
<div class="a" style="left:148px;top:771px;width:1110px;height:17px;background:#f0f0f0"></div>
<div class="a" style="left:148px;top:771px;width:1110px;height:1px;background:#fff"></div>
<div class="a" style="left:165px;top:772px;width:17px;height:15px;background:#cdcdcd"></div>
<svg style="left:152px;top:775px" width="8" height="9" viewBox="0 0 8 9"><path d="M6 0.5 L2 4.5 L6 8.5" fill="none" stroke="#606060" stroke-width="2"/></svg>
<svg style="left:1246px;top:775px" width="8" height="9" viewBox="0 0 8 9"><path d="M2 0.5 L6 4.5 L2 8.5" fill="none" stroke="#606060" stroke-width="2"/></svg>
<div class="a" style="left:142px;top:797px;width:1121px;height:2px;background:#a0a0a0"></div>
<div class="a" style="left:142px;top:797px;width:2px;height:157px;background:#a0a0a0"></div>
<div class="a" style="left:143px;top:798px;width:1120px;height:1px;background:#696969"></div>
<div class="a" style="left:143px;top:798px;width:1px;height:156px;background:#696969"></div>
<div class="a" style="left:144px;top:799px;width:1118px;height:136px;background:#f3f0eb"></div>
<div class="a" style="left:144px;top:799px;width:66px;height:27px;background:#fff"></div>
<div class="a" style="left:208px;top:800px;width:1px;height:25px;background:#a0a0a0"></div>
<div class="a" style="left:145px;top:824px;width:64px;height:1px;background:#a0a0a0"></div>
<div class="a" style="left:145px;top:800px;width:64px;height:25px;background:#000"></div>
<div class="t" style="top:806.84px;font-size:12px;color:#ffff00;left:157.0px;width:40px;text-align:center;transform:scaleX(0.88);transform-origin:50% 0;">3</div>
<div class="a" style="left:144px;top:825px;width:1118px;height:1px;background:#000"></div>
<div class="a" style="left:210px;top:826px;width:1051px;height:19px;background:#eef1f5"></div>
<div class="a" style="left:210px;top:845px;width:1051px;height:19px;background:#d6e4f4"></div>
<div class="a" style="left:210px;top:864px;width:1051px;height:19px;background:#eef1f5"></div>
<div class="a" style="left:210px;top:799px;width:198px;height:26px;background:#fff"></div>
<div class="a" style="left:407px;top:800px;width:1px;height:25px;background:#d8d8d8"></div>
<div class="a" style="left:211px;top:800px;width:196px;height:18px;background:#a9bdd0"></div>
<div class="a" style="left:211px;top:820px;width:197px;height:5px;background:#e6e6e6"></div>
<div class="t" style="top:803.54px;font-size:12px;color:#000;left:195.0px;width:198px;text-align:center;transform:scaleX(0.86);transform-origin:50% 0;">Origine</div>
<svg style="left:381px;top:804px" width="11" height="11" viewBox="0 0 11 11"><circle cx="6.2" cy="4.3" r="3.5" fill="none" stroke="#fff" stroke-width="1.1"/><path d="M3.73 6.77 A3.5 3.5 0 1 1 9.65 3.7" fill="none" stroke="#000" stroke-width="1.1"/><path d="M3.9 7.3 L1 10.2" stroke="#fff" stroke-width="1.1"/><path d="M3.3 6.6 L0.5 9.6" stroke="#000" stroke-width="1.1"/></svg>
<svg style="left:393px;top:804px" width="10" height="11" viewBox="0 0 10 11"><path d="M0.6 5 L4.6 1" stroke="#000" stroke-width="1.1"/><path d="M4.4 0.6 L9.2 5.2" stroke="#fff" stroke-width="1.1"/><path d="M0.5 5.3 H8.8" stroke="#000" stroke-width="1.1"/><path d="M1 6.4 H9" stroke="#fff" stroke-width="1"/><path d="M0.6 6.2 L4.8 10.4" stroke="#fff" stroke-width="1.1"/><path d="M9.2 5.9 L5.2 9.9" stroke="#000" stroke-width="1.1"/></svg>
<svg style="left:215px;top:821px" width="6" height="4" viewBox="0 0 6 4"><path d="M0 0 L6 0 L3 4 Z" fill="#000"/></svg>
<svg style="left:397px;top:821px" width="6" height="4" viewBox="0 0 6 4"><path d="M0 0 L6 0 L3 4 Z" fill="#000"/></svg>
<div class="dots" style="left:224px;top:822px;width:170px"></div>
<div class="a" style="left:409px;top:799px;width:72px;height:26px;background:#fff"></div>
<div class="a" style="left:480px;top:800px;width:1px;height:25px;background:#d8d8d8"></div>
<div class="a" style="left:410px;top:800px;width:70px;height:18px;background:#a9bdd0"></div>
<div class="a" style="left:410px;top:820px;width:71px;height:5px;background:#e6e6e6"></div>
<div class="t" style="top:803.54px;font-size:12px;color:#000;left:418.5px;transform:scaleX(0.86);transform-origin:0 0;">Data</div>
<svg style="left:454px;top:804px" width="11" height="11" viewBox="0 0 11 11"><circle cx="6.2" cy="4.3" r="3.5" fill="none" stroke="#fff" stroke-width="1.1"/><path d="M3.73 6.77 A3.5 3.5 0 1 1 9.65 3.7" fill="none" stroke="#000" stroke-width="1.1"/><path d="M3.9 7.3 L1 10.2" stroke="#fff" stroke-width="1.1"/><path d="M3.3 6.6 L0.5 9.6" stroke="#000" stroke-width="1.1"/></svg>
<svg style="left:466px;top:804px" width="10" height="11" viewBox="0 0 10 11"><path d="M0.5 1.2 H8.8" stroke="#000" stroke-width="1.2"/><path d="M0.8 1 L4.6 9" stroke="#000" stroke-width="1.2"/><path d="M9.2 0.8 L5.2 9.8" stroke="#fff" stroke-width="1.2"/></svg>
<svg style="left:414px;top:821px" width="6" height="4" viewBox="0 0 6 4"><path d="M0 0 L6 0 L3 4 Z" fill="#000"/></svg>
<svg style="left:470px;top:821px" width="6" height="4" viewBox="0 0 6 4"><path d="M0 0 L6 0 L3 4 Z" fill="#000"/></svg>
<div class="dots" style="left:423px;top:822px;width:44px"></div>
<div class="a" style="left:482px;top:799px;width:57px;height:26px;background:#fff"></div>
<div class="a" style="left:538px;top:800px;width:1px;height:25px;background:#d8d8d8"></div>
<div class="a" style="left:483px;top:800px;width:55px;height:18px;background:#a9bdd0"></div>
<div class="a" style="left:483px;top:820px;width:56px;height:5px;background:#e6e6e6"></div>
<div class="t" style="top:803.54px;font-size:12px;color:#000;left:487.5px;transform:scaleX(0.86);transform-origin:0 0;">Ora</div>
<svg style="left:512px;top:804px" width="11" height="11" viewBox="0 0 11 11"><circle cx="6.2" cy="4.3" r="3.5" fill="none" stroke="#fff" stroke-width="1.1"/><path d="M3.73 6.77 A3.5 3.5 0 1 1 9.65 3.7" fill="none" stroke="#000" stroke-width="1.1"/><path d="M3.9 7.3 L1 10.2" stroke="#fff" stroke-width="1.1"/><path d="M3.3 6.6 L0.5 9.6" stroke="#000" stroke-width="1.1"/></svg>
<svg style="left:524px;top:804px" width="10" height="11" viewBox="0 0 10 11"><path d="M0.6 5 L4.6 1" stroke="#000" stroke-width="1.1"/><path d="M4.4 0.6 L9.2 5.2" stroke="#fff" stroke-width="1.1"/><path d="M0.5 5.3 H8.8" stroke="#000" stroke-width="1.1"/><path d="M1 6.4 H9" stroke="#fff" stroke-width="1"/><path d="M0.6 6.2 L4.8 10.4" stroke="#fff" stroke-width="1.1"/><path d="M9.2 5.9 L5.2 9.9" stroke="#000" stroke-width="1.1"/></svg>
<svg style="left:487px;top:821px" width="6" height="4" viewBox="0 0 6 4"><path d="M0 0 L6 0 L3 4 Z" fill="#000"/></svg>
<svg style="left:528px;top:821px" width="6" height="4" viewBox="0 0 6 4"><path d="M0 0 L6 0 L3 4 Z" fill="#000"/></svg>
<div class="dots" style="left:496px;top:822px;width:29px"></div>
<div class="a" style="left:540px;top:799px;width:125px;height:26px;background:#fff"></div>
<div class="a" style="left:664px;top:800px;width:1px;height:25px;background:#d8d8d8"></div>
<div class="a" style="left:541px;top:800px;width:123px;height:18px;background:#a9bdd0"></div>
<div class="a" style="left:541px;top:820px;width:124px;height:5px;background:#e6e6e6"></div>
<div class="t" style="top:803.54px;font-size:12px;color:#000;left:525.0px;width:125px;text-align:center;transform:scaleX(0.86);transform-origin:50% 0;">Tipo</div>
<svg style="left:638px;top:804px" width="11" height="11" viewBox="0 0 11 11"><circle cx="6.2" cy="4.3" r="3.5" fill="none" stroke="#fff" stroke-width="1.1"/><path d="M3.73 6.77 A3.5 3.5 0 1 1 9.65 3.7" fill="none" stroke="#000" stroke-width="1.1"/><path d="M3.9 7.3 L1 10.2" stroke="#fff" stroke-width="1.1"/><path d="M3.3 6.6 L0.5 9.6" stroke="#000" stroke-width="1.1"/></svg>
<svg style="left:650px;top:804px" width="10" height="11" viewBox="0 0 10 11"><path d="M0.6 5 L4.6 1" stroke="#000" stroke-width="1.1"/><path d="M4.4 0.6 L9.2 5.2" stroke="#fff" stroke-width="1.1"/><path d="M0.5 5.3 H8.8" stroke="#000" stroke-width="1.1"/><path d="M1 6.4 H9" stroke="#fff" stroke-width="1"/><path d="M0.6 6.2 L4.8 10.4" stroke="#fff" stroke-width="1.1"/><path d="M9.2 5.9 L5.2 9.9" stroke="#000" stroke-width="1.1"/></svg>
<svg style="left:545px;top:821px" width="6" height="4" viewBox="0 0 6 4"><path d="M0 0 L6 0 L3 4 Z" fill="#000"/></svg>
<svg style="left:654px;top:821px" width="6" height="4" viewBox="0 0 6 4"><path d="M0 0 L6 0 L3 4 Z" fill="#000"/></svg>
<div class="dots" style="left:554px;top:822px;width:97px"></div>
<div class="a" style="left:666px;top:799px;width:70px;height:26px;background:#fff"></div>
<div class="a" style="left:735px;top:800px;width:1px;height:25px;background:#d8d8d8"></div>
<div class="a" style="left:667px;top:800px;width:68px;height:18px;background:#a9bdd0"></div>
<div class="a" style="left:667px;top:820px;width:69px;height:5px;background:#e6e6e6"></div>
<div class="t" style="top:803.54px;font-size:12px;color:#000;left:671.5px;transform:scaleX(0.86);transform-origin:0 0;">Totale</div>
<svg style="left:709px;top:804px" width="11" height="11" viewBox="0 0 11 11"><circle cx="6.2" cy="4.3" r="3.5" fill="none" stroke="#fff" stroke-width="1.1"/><path d="M3.73 6.77 A3.5 3.5 0 1 1 9.65 3.7" fill="none" stroke="#000" stroke-width="1.1"/><path d="M3.9 7.3 L1 10.2" stroke="#fff" stroke-width="1.1"/><path d="M3.3 6.6 L0.5 9.6" stroke="#000" stroke-width="1.1"/></svg>
<svg style="left:721px;top:804px" width="10" height="11" viewBox="0 0 10 11"><path d="M0.6 5 L4.6 1" stroke="#000" stroke-width="1.1"/><path d="M4.4 0.6 L9.2 5.2" stroke="#fff" stroke-width="1.1"/><path d="M0.5 5.3 H8.8" stroke="#000" stroke-width="1.1"/><path d="M1 6.4 H9" stroke="#fff" stroke-width="1"/><path d="M0.6 6.2 L4.8 10.4" stroke="#fff" stroke-width="1.1"/><path d="M9.2 5.9 L5.2 9.9" stroke="#000" stroke-width="1.1"/></svg>
<svg style="left:671px;top:821px" width="6" height="4" viewBox="0 0 6 4"><path d="M0 0 L6 0 L3 4 Z" fill="#000"/></svg>
<svg style="left:725px;top:821px" width="6" height="4" viewBox="0 0 6 4"><path d="M0 0 L6 0 L3 4 Z" fill="#000"/></svg>
<div class="dots" style="left:680px;top:822px;width:42px"></div>
<div class="a" style="left:737px;top:799px;width:91px;height:26px;background:#fff"></div>
<div class="a" style="left:827px;top:800px;width:1px;height:25px;background:#d8d8d8"></div>
<div class="a" style="left:738px;top:800px;width:89px;height:18px;background:#a9bdd0"></div>
<div class="a" style="left:738px;top:820px;width:90px;height:5px;background:#e6e6e6"></div>
<div class="t" style="top:803.54px;font-size:12px;color:#000;left:742px;transform:scaleX(0.86);transform-origin:0 0;">Quiz saltati</div>
<svg style="left:801px;top:804px" width="11" height="11" viewBox="0 0 11 11"><circle cx="6.2" cy="4.3" r="3.5" fill="none" stroke="#fff" stroke-width="1.1"/><path d="M3.73 6.77 A3.5 3.5 0 1 1 9.65 3.7" fill="none" stroke="#000" stroke-width="1.1"/><path d="M3.9 7.3 L1 10.2" stroke="#fff" stroke-width="1.1"/><path d="M3.3 6.6 L0.5 9.6" stroke="#000" stroke-width="1.1"/></svg>
<svg style="left:813px;top:804px" width="10" height="11" viewBox="0 0 10 11"><path d="M0.6 5 L4.6 1" stroke="#000" stroke-width="1.1"/><path d="M4.4 0.6 L9.2 5.2" stroke="#fff" stroke-width="1.1"/><path d="M0.5 5.3 H8.8" stroke="#000" stroke-width="1.1"/><path d="M1 6.4 H9" stroke="#fff" stroke-width="1"/><path d="M0.6 6.2 L4.8 10.4" stroke="#fff" stroke-width="1.1"/><path d="M9.2 5.9 L5.2 9.9" stroke="#000" stroke-width="1.1"/></svg>
<svg style="left:742px;top:821px" width="6" height="4" viewBox="0 0 6 4"><path d="M0 0 L6 0 L3 4 Z" fill="#000"/></svg>
<svg style="left:817px;top:821px" width="6" height="4" viewBox="0 0 6 4"><path d="M0 0 L6 0 L3 4 Z" fill="#000"/></svg>
<div class="dots" style="left:751px;top:822px;width:63px"></div>
<div class="a" style="left:829px;top:799px;width:64px;height:26px;background:#fff"></div>
<div class="a" style="left:892px;top:800px;width:1px;height:25px;background:#d8d8d8"></div>
<div class="a" style="left:830px;top:800px;width:62px;height:18px;background:#a9bdd0"></div>
<div class="a" style="left:830px;top:820px;width:63px;height:5px;background:#e6e6e6"></div>
<div class="t" style="top:803.54px;font-size:12px;color:#000;left:834px;transform:scaleX(0.86);transform-origin:0 0;">Errori</div>
<svg style="left:866px;top:804px" width="11" height="11" viewBox="0 0 11 11"><circle cx="6.2" cy="4.3" r="3.5" fill="none" stroke="#fff" stroke-width="1.1"/><path d="M3.73 6.77 A3.5 3.5 0 1 1 9.65 3.7" fill="none" stroke="#000" stroke-width="1.1"/><path d="M3.9 7.3 L1 10.2" stroke="#fff" stroke-width="1.1"/><path d="M3.3 6.6 L0.5 9.6" stroke="#000" stroke-width="1.1"/></svg>
<svg style="left:878px;top:804px" width="10" height="11" viewBox="0 0 10 11"><path d="M0.6 5 L4.6 1" stroke="#000" stroke-width="1.1"/><path d="M4.4 0.6 L9.2 5.2" stroke="#fff" stroke-width="1.1"/><path d="M0.5 5.3 H8.8" stroke="#000" stroke-width="1.1"/><path d="M1 6.4 H9" stroke="#fff" stroke-width="1"/><path d="M0.6 6.2 L4.8 10.4" stroke="#fff" stroke-width="1.1"/><path d="M9.2 5.9 L5.2 9.9" stroke="#000" stroke-width="1.1"/></svg>
<svg style="left:834px;top:821px" width="6" height="4" viewBox="0 0 6 4"><path d="M0 0 L6 0 L3 4 Z" fill="#000"/></svg>
<svg style="left:882px;top:821px" width="6" height="4" viewBox="0 0 6 4"><path d="M0 0 L6 0 L3 4 Z" fill="#000"/></svg>
<div class="dots" style="left:843px;top:822px;width:36px"></div>
<div class="a" style="left:894px;top:799px;width:121px;height:26px;background:#fff"></div>
<div class="a" style="left:1014px;top:800px;width:1px;height:25px;background:#d8d8d8"></div>
<div class="a" style="left:895px;top:800px;width:119px;height:18px;background:#a9bdd0"></div>
<div class="a" style="left:895px;top:820px;width:120px;height:5px;background:#e6e6e6"></div>
<div class="t" style="top:803.54px;font-size:12px;color:#000;left:900px;transform:scaleX(0.86);transform-origin:0 0;">Tempo impiegato</div>
<svg style="left:988px;top:804px" width="11" height="11" viewBox="0 0 11 11"><circle cx="6.2" cy="4.3" r="3.5" fill="none" stroke="#fff" stroke-width="1.1"/><path d="M3.73 6.77 A3.5 3.5 0 1 1 9.65 3.7" fill="none" stroke="#000" stroke-width="1.1"/><path d="M3.9 7.3 L1 10.2" stroke="#fff" stroke-width="1.1"/><path d="M3.3 6.6 L0.5 9.6" stroke="#000" stroke-width="1.1"/></svg>
<svg style="left:1000px;top:804px" width="10" height="11" viewBox="0 0 10 11"><path d="M0.6 5 L4.6 1" stroke="#000" stroke-width="1.1"/><path d="M4.4 0.6 L9.2 5.2" stroke="#fff" stroke-width="1.1"/><path d="M0.5 5.3 H8.8" stroke="#000" stroke-width="1.1"/><path d="M1 6.4 H9" stroke="#fff" stroke-width="1"/><path d="M0.6 6.2 L4.8 10.4" stroke="#fff" stroke-width="1.1"/><path d="M9.2 5.9 L5.2 9.9" stroke="#000" stroke-width="1.1"/></svg>
<svg style="left:899px;top:821px" width="6" height="4" viewBox="0 0 6 4"><path d="M0 0 L6 0 L3 4 Z" fill="#000"/></svg>
<svg style="left:1004px;top:821px" width="6" height="4" viewBox="0 0 6 4"><path d="M0 0 L6 0 L3 4 Z" fill="#000"/></svg>
<div class="dots" style="left:908px;top:822px;width:93px"></div>
<div class="a" style="left:1016px;top:799px;width:117px;height:26px;background:#fff"></div>
<div class="a" style="left:1132px;top:800px;width:1px;height:25px;background:#d8d8d8"></div>
<div class="a" style="left:1017px;top:800px;width:115px;height:18px;background:#a9bdd0"></div>
<div class="a" style="left:1017px;top:820px;width:116px;height:5px;background:#e6e6e6"></div>
<div class="t" style="top:803.54px;font-size:12px;color:#000;left:1020px;transform:scaleX(0.86);transform-origin:0 0;">Gruppo/Numero</div>
<svg style="left:1106px;top:804px" width="11" height="11" viewBox="0 0 11 11"><circle cx="6.2" cy="4.3" r="3.5" fill="none" stroke="#fff" stroke-width="1.1"/><path d="M3.73 6.77 A3.5 3.5 0 1 1 9.65 3.7" fill="none" stroke="#000" stroke-width="1.1"/><path d="M3.9 7.3 L1 10.2" stroke="#fff" stroke-width="1.1"/><path d="M3.3 6.6 L0.5 9.6" stroke="#000" stroke-width="1.1"/></svg>
<svg style="left:1118px;top:804px" width="10" height="11" viewBox="0 0 10 11"><path d="M0.6 5 L4.6 1" stroke="#000" stroke-width="1.1"/><path d="M4.4 0.6 L9.2 5.2" stroke="#fff" stroke-width="1.1"/><path d="M0.5 5.3 H8.8" stroke="#000" stroke-width="1.1"/><path d="M1 6.4 H9" stroke="#fff" stroke-width="1"/><path d="M0.6 6.2 L4.8 10.4" stroke="#fff" stroke-width="1.1"/><path d="M9.2 5.9 L5.2 9.9" stroke="#000" stroke-width="1.1"/></svg>
<svg style="left:1021px;top:821px" width="6" height="4" viewBox="0 0 6 4"><path d="M0 0 L6 0 L3 4 Z" fill="#000"/></svg>
<svg style="left:1122px;top:821px" width="6" height="4" viewBox="0 0 6 4"><path d="M0 0 L6 0 L3 4 Z" fill="#000"/></svg>
<div class="dots" style="left:1030px;top:822px;width:89px"></div>
<div class="a" style="left:1134px;top:800px;width:127px;height:25px;background:#fff"></div>
<div class="a" style="left:1135px;top:800px;width:127px;height:18px;background:#a9bdd0"></div>
<div class="a" style="left:1135px;top:820px;width:127px;height:5px;background:#e6e6e6"></div>
<svg style="left:1139px;top:821px" width="6" height="4" viewBox="0 0 6 4"><path d="M0 0 L6 0 L3 4 Z" fill="#000"/></svg>
<div class="dots" style="left:1148px;top:822px;width:113px"></div>
<div class="t" style="top:803.54px;font-size:12px;color:#000;left:1221px;transform:scaleX(0.86);transform-origin:0 0;">Titolo</div>
<div class="a" style="left:209px;top:800px;width:1px;height:83px;background:#000"></div>
<div class="a" style="left:408px;top:800px;width:1px;height:83px;background:#000"></div>
<div class="a" style="left:481px;top:800px;width:1px;height:83px;background:#000"></div>
<div class="a" style="left:539px;top:800px;width:1px;height:83px;background:#000"></div>
<div class="a" style="left:665px;top:800px;width:1px;height:83px;background:#000"></div>
<div class="a" style="left:736px;top:800px;width:1px;height:83px;background:#000"></div>
<div class="a" style="left:828px;top:800px;width:1px;height:83px;background:#000"></div>
<div class="a" style="left:893px;top:800px;width:1px;height:83px;background:#000"></div>
<div class="a" style="left:1015px;top:800px;width:1px;height:83px;background:#000"></div>
<div class="a" style="left:1133px;top:800px;width:1px;height:83px;background:#000"></div>
<div class="a" style="left:210px;top:826px;width:198px;height:19px;background:#000"></div>
<div class="a" style="left:144px;top:826px;width:66px;height:19px;background:#000"></div>
<div class="a" style="left:145px;top:826px;width:63px;height:18px;background:#fff"></div>
<div class="a" style="left:146px;top:827px;width:62px;height:17px;background:#f2f0ec"></div>
<div class="t" style="top:828.94px;font-size:12px;color:#000;left:152.0px;width:50px;text-align:center;transform:scaleX(0.865);transform-origin:50% 0;">4911</div>
<div class="a" style="left:144px;top:845px;width:66px;height:19px;background:#000"></div>
<div class="a" style="left:145px;top:845px;width:63px;height:18px;background:#fff"></div>
<div class="a" style="left:146px;top:846px;width:62px;height:17px;background:#f2f0ec"></div>
<div class="t" style="top:847.94px;font-size:12px;color:#000;left:152.0px;width:50px;text-align:center;transform:scaleX(0.865);transform-origin:50% 0;">4912</div>
<div class="a" style="left:144px;top:864px;width:66px;height:19px;background:#000"></div>
<div class="a" style="left:145px;top:864px;width:63px;height:18px;background:#fff"></div>
<div class="a" style="left:146px;top:865px;width:62px;height:17px;background:#f2f0ec"></div>
<div class="t" style="top:866.94px;font-size:12px;color:#000;left:152.0px;width:50px;text-align:center;transform:scaleX(0.865);transform-origin:50% 0;">4913</div>
<div class="t" style="top:828.60px;font-size:13px;color:#fff;left:211px;width:197px;overflow:hidden;">Libro SIDA (QuizApp, QuizCasa)</div>
<div class="t" style="top:828.60px;font-size:13px;color:#000;left:410px;width:71px;overflow:hidden;">19/09/2018</div>
<div class="t" style="top:828.60px;font-size:13px;color:#000;left:483px;width:56px;overflow:hidden;">11:45</div>
<div class="t" style="top:828.60px;font-size:13px;color:#000;left:541px;width:124px;overflow:hidden;">Fac-simile esame</div>
<div class="t" style="top:828.60px;font-size:13px;color:#000;left:666px;width:70px;text-align:right;">20</div>
<div class="t" style="top:828.60px;font-size:13px;color:#000;left:737px;width:91px;text-align:right;">0</div>
<div class="t" style="top:828.60px;font-size:13px;color:#000;left:829px;width:64px;text-align:right;">11</div>
<div class="t" style="top:828.60px;font-size:13px;color:#000;left:894px;width:121px;text-align:right;">16</div>
<div class="t" style="top:828.60px;font-size:13px;color:#000;left:1017px;width:116px;overflow:hidden;">12952/1</div>
<div class="t" style="top:828.60px;font-size:13px;color:#000;left:1135px;width:126px;overflow:hidden;">Fac-simile esame pe</div>
<div class="t" style="top:847.60px;font-size:13px;color:#000;left:211px;width:197px;overflow:hidden;">Libro SIDA (QuizApp, QuizCasa)</div>
<div class="t" style="top:847.60px;font-size:13px;color:#000;left:410px;width:71px;overflow:hidden;">19/09/2018</div>
<div class="t" style="top:847.60px;font-size:13px;color:#000;left:483px;width:56px;overflow:hidden;">11:45</div>
<div class="t" style="top:847.60px;font-size:13px;color:#000;left:541px;width:124px;overflow:hidden;">Fac-simile esame</div>
<div class="t" style="top:847.60px;font-size:13px;color:#000;left:666px;width:70px;text-align:right;">20</div>
<div class="t" style="top:847.60px;font-size:13px;color:#000;left:737px;width:91px;text-align:right;">0</div>
<div class="t" style="top:847.60px;font-size:13px;color:#000;left:829px;width:64px;text-align:right;">11</div>
<div class="t" style="top:847.60px;font-size:13px;color:#000;left:894px;width:121px;text-align:right;">12</div>
<div class="t" style="top:847.60px;font-size:13px;color:#000;left:1017px;width:116px;overflow:hidden;">0/2</div>
<div class="t" style="top:847.60px;font-size:13px;color:#000;left:1135px;width:126px;overflow:hidden;">Fac-simile esame pe</div>
<div class="t" style="top:866.60px;font-size:13px;color:#000;left:211px;width:197px;overflow:hidden;">Libro SIDA (QuizApp, QuizCasa)</div>
<div class="t" style="top:866.60px;font-size:13px;color:#000;left:410px;width:71px;overflow:hidden;">19/09/2018</div>
<div class="t" style="top:866.60px;font-size:13px;color:#000;left:483px;width:56px;overflow:hidden;">11:45</div>
<div class="t" style="top:866.60px;font-size:13px;color:#000;left:541px;width:124px;overflow:hidden;">Fac-simile esame</div>
<div class="t" style="top:866.60px;font-size:13px;color:#000;left:666px;width:70px;text-align:right;">20</div>
<div class="t" style="top:866.60px;font-size:13px;color:#000;left:737px;width:91px;text-align:right;">0</div>
<div class="t" style="top:866.60px;font-size:13px;color:#000;left:829px;width:64px;text-align:right;">12</div>
<div class="t" style="top:866.60px;font-size:13px;color:#000;left:894px;width:121px;text-align:right;">12</div>
<div class="t" style="top:866.60px;font-size:13px;color:#000;left:1017px;width:116px;overflow:hidden;">0/3</div>
<div class="t" style="top:866.60px;font-size:13px;color:#000;left:1135px;width:126px;overflow:hidden;">Fac-simile esame pe</div>
<div class="a" style="left:144px;top:935px;width:1118px;height:1px;background:#fff"></div>
<div class="a" style="left:144px;top:936px;width:1118px;height:17px;background:#f0f0f0"></div>
<div class="a" style="left:162px;top:936px;width:17px;height:15px;background:#cdcdcd"></div>
<svg style="left:149px;top:939px" width="8" height="9" viewBox="0 0 8 9"><path d="M6 0.5 L2 4.5 L6 8.5" fill="none" stroke="#606060" stroke-width="2"/></svg>
<svg style="left:1248px;top:939px" width="8" height="9" viewBox="0 0 8 9"><path d="M2 0.5 L6 4.5 L2 8.5" fill="none" stroke="#606060" stroke-width="2"/></svg>
<div class="a" style="left:142px;top:955px;width:1122px;height:19px;background:#f0f0f0"></div>
<div class="a" style="left:1263px;top:957px;width:1px;height:16px;background:#d0d0d0"></div>
<div class="t" style="top:959.57px;font-size:11.5px;color:#000;left:144px;transform:scaleX(1.035);transform-origin:0 0;">Sede principale/centro: 117 candidati. Completato</div>
</body></html>
